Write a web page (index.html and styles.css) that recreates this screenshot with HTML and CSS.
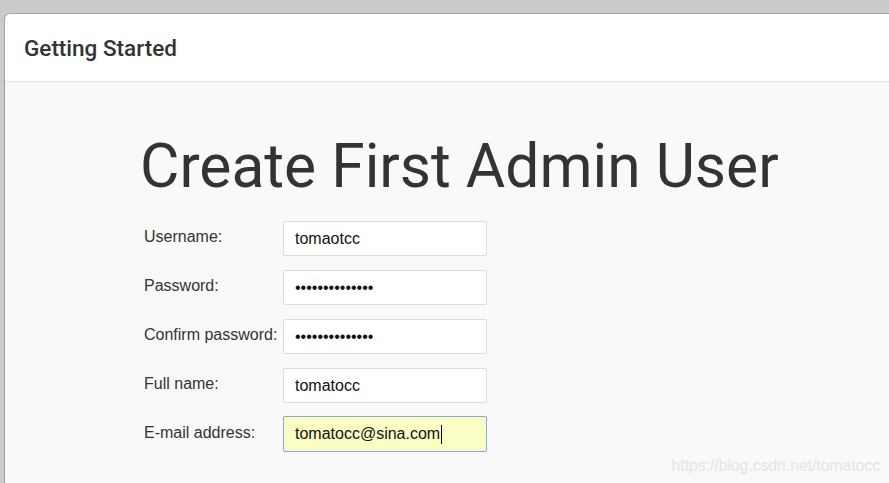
FILE: index.html
```html
<!DOCTYPE html>
<html>
<head>
<meta charset="utf-8">
<link rel="stylesheet" href="styles.css">
</head>
<body>
<div class="dialog">
  <div class="header">
    <h2 class="title">Getting Started</h2>
  </div>
  <div class="content">
    <h1 class="heading">Create First Admin User</h1>
    <form class="form">
      <label class="label">Username:</label>
      <input class="field" type="text" value="tomaotcc">
      <label class="label">Password:</label>
      <input class="field" type="password" value="tomatocc123456">
      <label class="label">Confirm password:</label>
      <input class="field" type="password" value="tomatocc123456">
      <label class="label">Full name:</label>
      <input class="field" type="text" value="tomatocc">
      <label class="label">E-mail address:</label>
      <span class="field-wrap"><input class="field field-active" type="text" value="tomatocc@sina.com"><span class="caret"></span></span>
    </form>
    <div class="watermark">https://blog.csdn.net/tomatocc</div>
  </div>
</div>
</body>
</html>
```
FILE: styles.css
```css
html, body {
  margin: 0;
  padding: 0;
  height: 100%;
  overflow: hidden;
}
body {
  background: #cbcbcb;
  font-family: "Liberation Sans", Arial, sans-serif;
}
.dialog {
  margin: 13px 0 0 4px;
  height: calc(100% - 13px);
  background: #fff;
  border-top: 1px solid #a9a9a9;
  border-left: 1px solid #9e9e9e;
  border-top-left-radius: 6px;
  display: flex;
  flex-direction: column;
  box-sizing: border-box;
}
.header {
  height: 67px;
  border-bottom: 1px solid #e3e3e3;
  display: flex;
  align-items: center;
  padding-left: 19px;
  flex: none;
}
.title {
  margin: 0;
  font-family: Roboto, "Noto Sans", sans-serif;
  font-weight: 500;
  font-size: 22.5px;
  color: #333;
  padding-top: 1px;
}
.content {
  flex: 1;
  background: #f9f9f9;
  position: relative;
  padding: 45px 0 0 0;
}
.heading {
  margin: 0 0 14px 135px;
  font-family: Roboto, "Noto Sans", sans-serif;
  font-weight: 400;
  font-size: 60.5px;
  line-height: 80px;
  color: #333;
  white-space: nowrap;
}
.form {
  display: grid;
  grid-template-columns: 139px 204px;
  row-gap: 14px;
  margin-left: 139px;
}
.label {
  font-size: 16px;
  color: #333;
  padding-top: 7px;
  white-space: nowrap;
}
.field {
  box-sizing: border-box;
  width: 204px;
  height: 35px;
  border: 1px solid #dcdcdc;
  border-radius: 2px;
  background: #fff;
  padding: 0 11px;
  font-family: "Liberation Sans", Arial, sans-serif;
  font-size: 16px;
  color: #111;
  outline: none;
  margin: 0;
}
.field-wrap {
  position: relative;
  display: block;
  width: 204px;
  height: 35px;
  margin-top: -1px;
}
.field-active {
  background: #fafdc4;
  border: 1px solid #86a8de;
  height: 36px;
}
.caret {
  position: absolute;
  left: 158px;
  top: 9px;
  width: 1px;
  height: 19px;
  background: #000;
}
.watermark {
  position: absolute;
  right: 9px;
  bottom: 8px;
  font-size: 15.7px;
  color: #e4e4e4;
  white-space: nowrap;
}
```
